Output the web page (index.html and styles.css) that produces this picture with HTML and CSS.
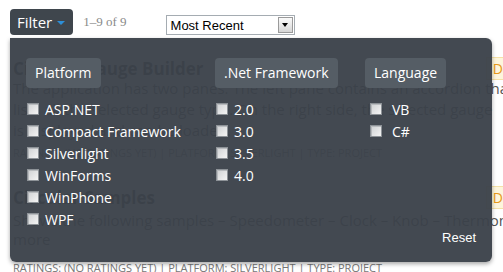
FILE: index.html
```html
<!DOCTYPE html>
<html lang="en">
<head>
    <meta charset="UTF-8">
    <title>Gallery Filter</title>
    <link rel="stylesheet" href="styles.css">
</head>
<body>
    <div class="toolbar">
        <button class="filter-btn">Filter <span class="caret"></span></button>
        <span class="count">1–9 of 9</span>
        <div class="sort-select">
            <span class="sort-value">Most Recent</span>
            <span class="sort-arrow"><span class="tri"></span></span>
        </div>
    </div>

    <div class="results">
        <div class="item">
            <div class="item-head">
                <h3>Circular Gauge Builder</h3>
                <span class="badge">Download</span>
            </div>
            <p>The application has two panes. The left pane contains an accordion that</p>
            <p>lists all the selected gauge type. On the right side, the selected gauge</p>
            <p>is displayed and can be loaded.</p>
            <div class="meta">RATINGS: (NO RATINGS YET) | PLATFORM: SILVERLIGHT | TYPE: PROJECT</div>
        </div>
        <div class="item item-second">
            <div class="item-head">
                <h3>Circular Samples</h3>
                <span class="badge">Download</span>
            </div>
            <p>Shows the following samples – Speedometer – Clock – Knob – Thermometer</p>
            <p>more</p>
            <div class="meta">RATINGS: (NO RATINGS YET) | PLATFORM: SILVERLIGHT | TYPE: PROJECT</div>
        </div>
    </div>

    <div class="filter-panel">
        <div class="filter-cols">
            <div class="filter-col">
                <div class="col-title">Platform</div>
                <label class="opt"><input type="checkbox"> ASP.NET</label>
                <label class="opt"><input type="checkbox"> Compact Framework</label>
                <label class="opt"><input type="checkbox"> Silverlight</label>
                <label class="opt"><input type="checkbox"> WinForms</label>
                <label class="opt"><input type="checkbox"> WinPhone</label>
                <label class="opt"><input type="checkbox"> WPF</label>
            </div>
            <div class="filter-col">
                <div class="col-title">.Net Framework</div>
                <label class="opt"><input type="checkbox"> 2.0</label>
                <label class="opt"><input type="checkbox"> 3.0</label>
                <label class="opt"><input type="checkbox"> 3.5</label>
                <label class="opt"><input type="checkbox"> 4.0</label>
            </div>
            <div class="filter-col">
                <div class="col-title">Language</div>
                <label class="opt opt-wide"><input type="checkbox"> VB</label>
                <label class="opt opt-wide"><input type="checkbox"> C#</label>
            </div>
        </div>
        <div class="panel-foot">
            <a class="reset" href="#">Reset</a>
        </div>
    </div>
</body>
</html>
```

FILE: styles.css
```css
body {
    margin: 0;
    font-family: "Open Sans", sans-serif;
    background: #fff;
    overflow: hidden;
    position: relative;
    height: 272px;
}
.toolbar {
    display: flex;
    align-items: center;
    padding: 9px 10px 0;
    height: 26px;
}
.filter-btn {
    display: flex;
    align-items: center;
    height: 26px;
    padding: 0 8px 0 7px;
    background: #3f464d;
    color: #fff;
    border: none;
    border-radius: 4px;
    font-family: "Open Sans", sans-serif;
    font-size: 15px;
    cursor: pointer;
}
.caret {
    width: 0;
    height: 0;
    margin-left: 5px;
    margin-top: 2px;
    border-left: 4px solid transparent;
    border-right: 4px solid transparent;
    border-top: 4px solid #2d8fd8;
}
.count {
    margin-left: 10px;
    color: #8a8a8a;
    font-family: "Liberation Serif", serif;
    font-size: 13px;
}
.sort-select {
    display: flex;
    align-items: center;
    margin-left: 39px;
    margin-top: 6px;
    width: 127px;
    height: 18px;
    border: 1px solid #a5acb2;
    font-family: "Liberation Sans", Arial, sans-serif;
    font-size: 13px;
    color: #000;
}
.sort-value {
    flex: 1;
    padding-left: 4px;
}
.sort-arrow {
    display: flex;
    align-items: center;
    justify-content: center;
    width: 13px;
    height: 14px;
    margin-right: 1px;
    border: 1px solid #9a9a9a;
    background: linear-gradient(#fafafa, #d6d6d6);
}
.tri {
    width: 0;
    height: 0;
    border-left: 3px solid transparent;
    border-right: 3px solid transparent;
    border-top: 4px solid #000;
}
.results {
    padding: 23px 0 0 13px;
    white-space: nowrap;
    color: #555;
}
.item-head {
    display: flex;
    justify-content: space-between;
    align-items: center;
    height: 20px;
}
.item h3 {
    margin: 0;
    font-size: 17px;
    color: #3b3b3b;
}
.badge {
    margin-right: -63px;
    padding: 1px 6px;
    background: #fdf6dc;
    border: 1px solid #f5e2a8;
    color: #e89a1b;
    font-size: 14px;
}
.item p {
    margin: 0;
    font-size: 15px;
    line-height: 21px;
}
.meta {
    margin-top: 4px;
    font-size: 11px;
    color: #777;
}
.item-second {
    margin-top: 27px;
}
.item-second .item-head {
    margin-bottom: 4px;
}
.item-second p {
    line-height: 19px;
}
.item-second .meta {
    margin-top: 11px;
}
.filter-panel {
    position: absolute;
    left: 10px;
    top: 38px;
    width: 482px;
    height: 224px;
    box-sizing: border-box;
    padding: 20px 16px 0 16px;
    background: rgba(59, 66, 74, 0.96);
    border-radius: 0 6px 6px 6px;
    box-shadow: 0 2px 4px rgba(0, 0, 0, 0.35);
    color: #fff;
}
.filter-cols {
    display: grid;
    grid-template-columns: 189px 150px auto;
}
.col-title {
    height: 30px;
    line-height: 30px;
    padding: 0 9px;
    margin-bottom: 10px;
    background: #555d65;
    border-radius: 4px;
    font-size: 14px;
}
.filter-col {
    display: flex;
    flex-direction: column;
    align-items: flex-start;
}
.opt {
    display: flex;
    align-items: center;
    height: 22px;
    font-size: 14px;
}
.opt input {
    appearance: none;
    width: 12px;
    height: 12px;
    margin: 0 6px 0 1px;
    border: 1px solid #8d9297;
    background: linear-gradient(135deg, #cfd1d3, #f4f4f4);
    box-shadow: inset 1px 1px 0 #b8bbbe;
}
.opt-wide input {
    margin: 0 10px 0 5px;
}
.panel-foot {
    display: flex;
    justify-content: flex-end;
    margin-top: 0;
}
.reset {
    color: #fff;
    text-decoration: none;
    font-family: "Liberation Sans", Arial, sans-serif;
    font-size: 13px;
    line-height: 16px;
}
```
